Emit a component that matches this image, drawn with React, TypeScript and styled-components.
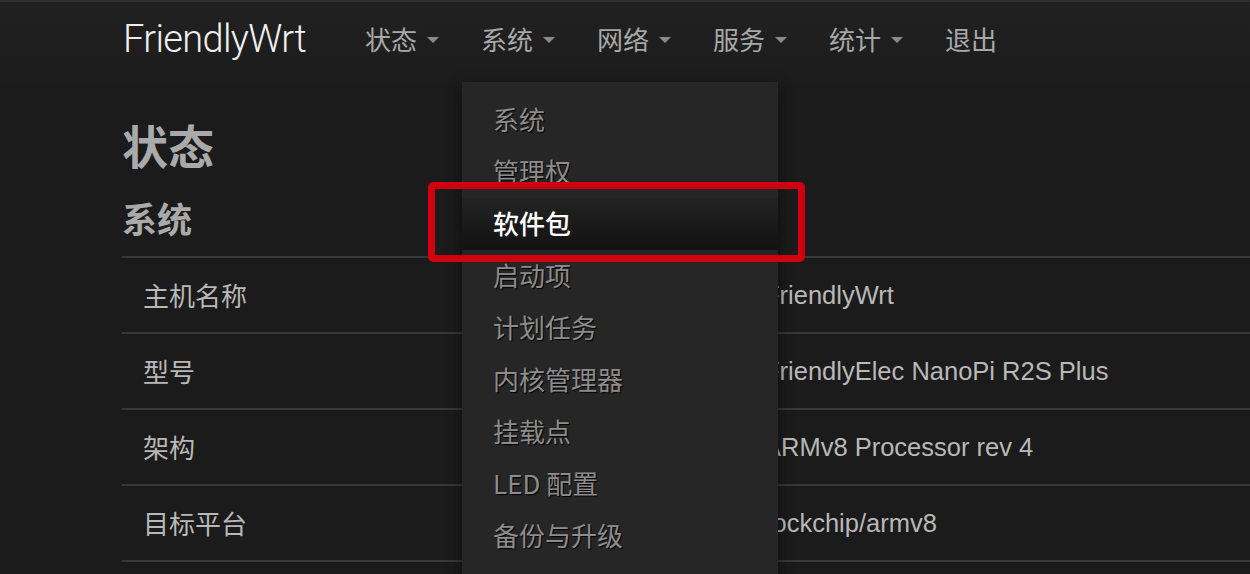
import React from "react";
import styled, { createGlobalStyle } from "styled-components";

const GlobalStyle = createGlobalStyle`
  html, body {
    margin: 0;
    padding: 0;
    background: #1b1b1b;
    overflow: hidden;
  }
  body {
    font-family: "Liberation Sans", "Noto Sans CJK SC", sans-serif;
    color: #b5b5b5;
  }
`;

const cjk = `"Noto Sans CJK SC", "Liberation Sans", sans-serif`;

const Page = styled.div`
  width: 1250px;
  height: 574px;
  overflow: hidden;
  position: relative;
`;

const Header = styled.header`
  height: 80px;
  border-top: 2px solid #2e2e2e;
  background: linear-gradient(#212121, #1c1c1c);
  display: flex;
  align-items: stretch;
  padding-left: 123px;
  position: relative;
  z-index: 5;
`;

const Brand = styled.a`
  font-family: "Roboto", "Liberation Sans", sans-serif;
  font-weight: 300;
  font-size: 38px;
  color: #f0f0f0;
  letter-spacing: -0.65px;
  display: flex;
  align-items: center;
  margin-top: -6px;
  width: 223px;
`;

const Nav = styled.ul`
  list-style: none;
  margin: 0;
  padding: 0;
  display: flex;
  gap: 4px;
`;

const NavItem = styled.li`
  position: relative;
  display: flex;
  align-items: center;
  padding: 0 19px;
  margin-top: -7px;
  font-family: ${cjk};
  font-size: 26px;
  color: #a8a8a8;
`;

const Caret = styled.span`
  display: inline-block;
  margin-left: 10px;
  margin-top: 2px;
  width: 0;
  height: 0;
  border-left: 6px solid transparent;
  border-right: 6px solid transparent;
  border-top: 6px solid #8a8a8a;
`;

const Dropdown = styled.ul`
  position: absolute;
  left: 0;
  top: 87px;
  width: 316px;
  height: 520px;
  margin: 0;
  padding: 12px 0 0;
  list-style: none;
  background: #262626;
  box-shadow: 0 4px 12px rgba(0, 0, 0, 0.55);
`;

const MenuItem = styled.li<{ $active?: boolean }>`
  position: relative;
  height: 52px;
  box-sizing: border-box;
  padding: 0 0 4px 31px;
  display: flex;
  align-items: center;
  font-family: ${cjk};
  font-size: 26px;
  color: ${(p) => (p.$active ? "#ffffff" : "#8c8c8c")};
  font-weight: ${(p) => (p.$active ? 500 : 400)};
  text-shadow: ${(p) => (p.$active ? "none" : "1px 1px 1px #000")};
  background: ${(p) =>
    p.$active ? "linear-gradient(#232323, #121212)" : "transparent"};
`;

const Highlight = styled.span`
  position: absolute;
  left: -34px;
  right: -27px;
  top: -16px;
  bottom: -12px;
  border: 7px solid #d0000f;
  border-radius: 5px;
  pointer-events: none;
`;

const Main = styled.main`
  padding: 36px 0 0 122px;
`;

const Title = styled.h1`
  margin: 0;
  font-family: ${cjk};
  font-size: 46px;
  line-height: 52px;
  font-weight: 700;
  color: #aaaaaa;
`;

const Section = styled.h2`
  margin: 28px 0 18px;
  font-family: ${cjk};
  font-size: 35px;
  line-height: 40px;
  font-weight: 700;
  color: #aaaaaa;
`;

const Table = styled.div`
  display: grid;
  grid-template-columns: 642px 1fr;
  border-bottom: 2px solid #383838;
`;

const Row = styled.div`
  display: contents;
`;

const Cell = styled.div<{ $latin?: boolean }>`
  border-top: 2px solid #383838;
  height: 76px;
  box-sizing: border-box;
  padding-bottom: ${(p) => (p.$latin ? "0" : "2px")};
  display: flex;
  align-items: center;
  padding-left: ${(p) => (p.$latin ? "0" : "21px")};
  font-family: ${(p) =>
    p.$latin ? `"Liberation Sans", sans-serif` : cjk};
  font-size: ${(p) => (p.$latin ? "25.5px" : "26px")};
  color: #b8b8b8;
`;

const menu = [
  "系统",
  "管理权",
  "软件包",
  "启动项",
  "计划任务",
  "内核管理器",
  "挂载点",
  "LED 配置",
  "备份与升级",
];

const rows: [string, string][] = [
  ["主机名称", "FriendlyWrt"],
  ["型号", "FriendlyElec NanoPi R2S Plus"],
  ["架构", "ARMv8 Processor rev 4"],
  ["目标平台", "rockchip/armv8"],
];

export default function App() {
  return (
    <Page>
      <GlobalStyle />
      <Header>
        <Brand>FriendlyWrt</Brand>
        <Nav>
          <NavItem>
            状态<Caret />
          </NavItem>
          <NavItem>
            系统<Caret />
            <Dropdown>
              {menu.map((m) => (
                <MenuItem key={m} $active={m === "软件包"}>
                  {m}
                  {m === "软件包" && <Highlight />}
                </MenuItem>
              ))}
            </Dropdown>
          </NavItem>
          <NavItem>
            网络<Caret />
          </NavItem>
          <NavItem>
            服务<Caret />
          </NavItem>
          <NavItem>
            统计<Caret />
          </NavItem>
          <NavItem>退出</NavItem>
        </Nav>
      </Header>
      <Main>
        <Title>状态</Title>
        <Section>系统</Section>
        <Table>
          {rows.map(([k, v]) => (
            <Row key={k}>
              <Cell>{k}</Cell>
              <Cell $latin>{v}</Cell>
            </Row>
          ))}
        </Table>
      </Main>
    </Page>
  );
}
